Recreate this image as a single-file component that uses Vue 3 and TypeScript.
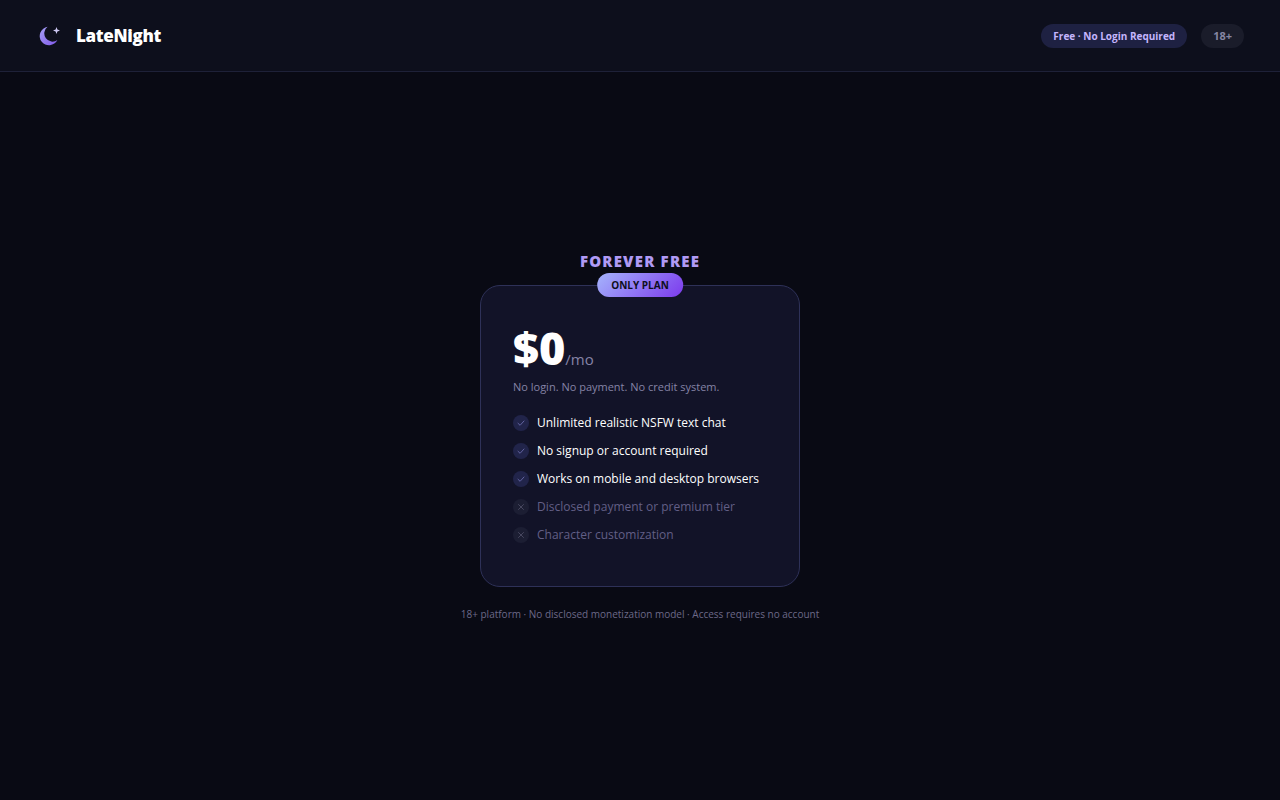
<script setup lang="ts">
interface Feature {
  label: string
  included: boolean
}

const features: Feature[] = [
  { label: 'Unlimited realistic NSFW text chat', included: true },
  { label: 'No signup or account required', included: true },
  { label: 'Works on mobile and desktop browsers', included: true },
  { label: 'Disclosed payment or premium tier', included: false },
  { label: 'Character customization', included: false },
]
</script>

<template>
  <div class="page">
    <header class="topbar">
      <div class="brand">
        <svg class="logo" viewBox="0 0 28 28" aria-hidden="true">
          <defs>
            <linearGradient id="moon" x1="0" y1="0" x2="1" y2="1">
              <stop offset="0" stop-color="#a5a0f4" />
              <stop offset="1" stop-color="#8058ea" />
            </linearGradient>
          </defs>
          <path d="M11.6 4.8A9.3 9.3 0 1 0 21.4 18A8 8 0 0 1 11.6 4.8Z" fill="url(#moon)" />
          <path d="M20.5 5L21.4 7.6L24 8.5L21.4 9.4L20.5 12L19.6 9.4L17 8.5L19.6 7.6Z" fill="#cdc8f2" />
        </svg>
        <span class="brand-name">LateNight</span>
      </div>
      <div class="badges">
        <span class="badge badge-free">Free · No Login Required</span>
        <span class="badge badge-age">18+</span>
      </div>
    </header>

    <main class="content">
      <h1 class="heading">Forever Free</h1>
      <section class="card">
        <span class="ribbon">ONLY PLAN</span>
        <p class="price"><span class="amount">$0</span><span class="period">/mo</span></p>
        <p class="summary">No login. No payment. No credit system.</p>
        <ul class="features">
          <li v-for="f in features" :key="f.label" class="feature" :class="{ excluded: !f.included }">
            <svg class="mark" viewBox="0 0 16 16" aria-hidden="true">
              <circle class="disc" cx="8" cy="8" r="8" />
              <path v-if="f.included" class="stroke" d="M5 8.3L7.1 10.3L11 6" />
              <path v-else class="stroke" d="M5.5 5.5L10.5 10.5M10.5 5.5L5.5 10.5" />
            </svg>
            <span>{{ f.label }}</span>
          </li>
        </ul>
      </section>
      <p class="note">18+ platform · No disclosed monetization model · Access requires no account</p>
    </main>
  </div>
</template>

<style>
body {
  margin: 0;
  background: #090a14;
}
</style>

<style scoped>
.page {
  min-height: 100vh;
  display: flex;
  flex-direction: column;
  background: #090a14;
  color: #fff;
  font-family: "Segoe UI", "Open Sans", "Noto Sans", sans-serif;
}

.topbar {
  display: flex;
  align-items: center;
  justify-content: space-between;
  height: 71px;
  padding: 0 36px;
  background: #0d0f1c;
  border-bottom: 1px solid #1e2138;
}

.brand {
  display: flex;
  align-items: center;
  gap: 12px;
}

.logo {
  width: 28px;
  height: 28px;
}

.brand-name {
  font-size: 17px;
  font-weight: 800;
  line-height: 25px;
  letter-spacing: -0.02em;
}

.badges {
  display: flex;
  align-items: center;
  gap: 14px;
}

.badge {
  padding: 0 12px;
  border-radius: 12px;
  font-size: 10px;
  font-weight: 700;
  line-height: 24px;
}

.badge-free {
  background: #1e2142;
  color: #c4b5fd;
}

.badge-age {
  background: #1a1c2a;
  color: #8585a2;
  font-size: 11px;
}

.content {
  flex: 1;
  display: flex;
  flex-direction: column;
  align-items: center;
  justify-content: center;
  padding: 0 24px;
}

.heading {
  margin: 0 0 12px;
  font-size: 15px;
  font-weight: 800;
  line-height: 24px;
  letter-spacing: 0.08em;
  text-transform: uppercase;
  color: #b09af5;
}

.card {
  position: relative;
  box-sizing: border-box;
  width: 100%;
  max-width: 320px;
  padding: 38px 32px 41px;
  background: #121328;
  border: 1px solid #2e3158;
  border-radius: 20px;
}

.ribbon {
  position: absolute;
  top: -13px;
  left: 50%;
  transform: translateX(-50%);
  padding: 0 14px;
  border-radius: 12px;
  background: linear-gradient(135deg, #a5b4fc, #7c3aed);
  color: #0d0f1c;
  font-size: 10px;
  font-weight: 700;
  line-height: 24px;
  white-space: nowrap;
}

.price {
  display: flex;
  align-items: baseline;
  margin: 0 0 5px;
}

.amount {
  font-size: 45px;
  font-weight: 800;
  line-height: 48px;
}

.period {
  font-size: 15px;
  font-weight: 500;
  line-height: 20px;
  color: #8583a6;
}

.summary {
  margin: 0 0 16px;
  font-size: 11px;
  line-height: 20px;
  color: #8583a6;
}

.features {
  display: flex;
  flex-direction: column;
  gap: 8px;
  margin: 0;
  padding: 0;
  list-style: none;
}

.feature {
  display: flex;
  align-items: center;
  gap: 8px;
  font-size: 12px;
  line-height: 20px;
  white-space: nowrap;
}

.excluded {
  color: #625f86;
}

.mark {
  flex: none;
  width: 16px;
  height: 16px;
}

.disc {
  fill: #21244a;
}

.stroke {
  fill: none;
  stroke: #6263a0;
  stroke-linecap: round;
  stroke-linejoin: round;
}

.excluded .disc {
  fill: #1c1e33;
}

.excluded .stroke {
  stroke: #47475f;
}

.note {
  margin: 17px 0 0;
  font-size: 10px;
  line-height: 20px;
  text-align: center;
  color: #6c6988;
}
</style>
